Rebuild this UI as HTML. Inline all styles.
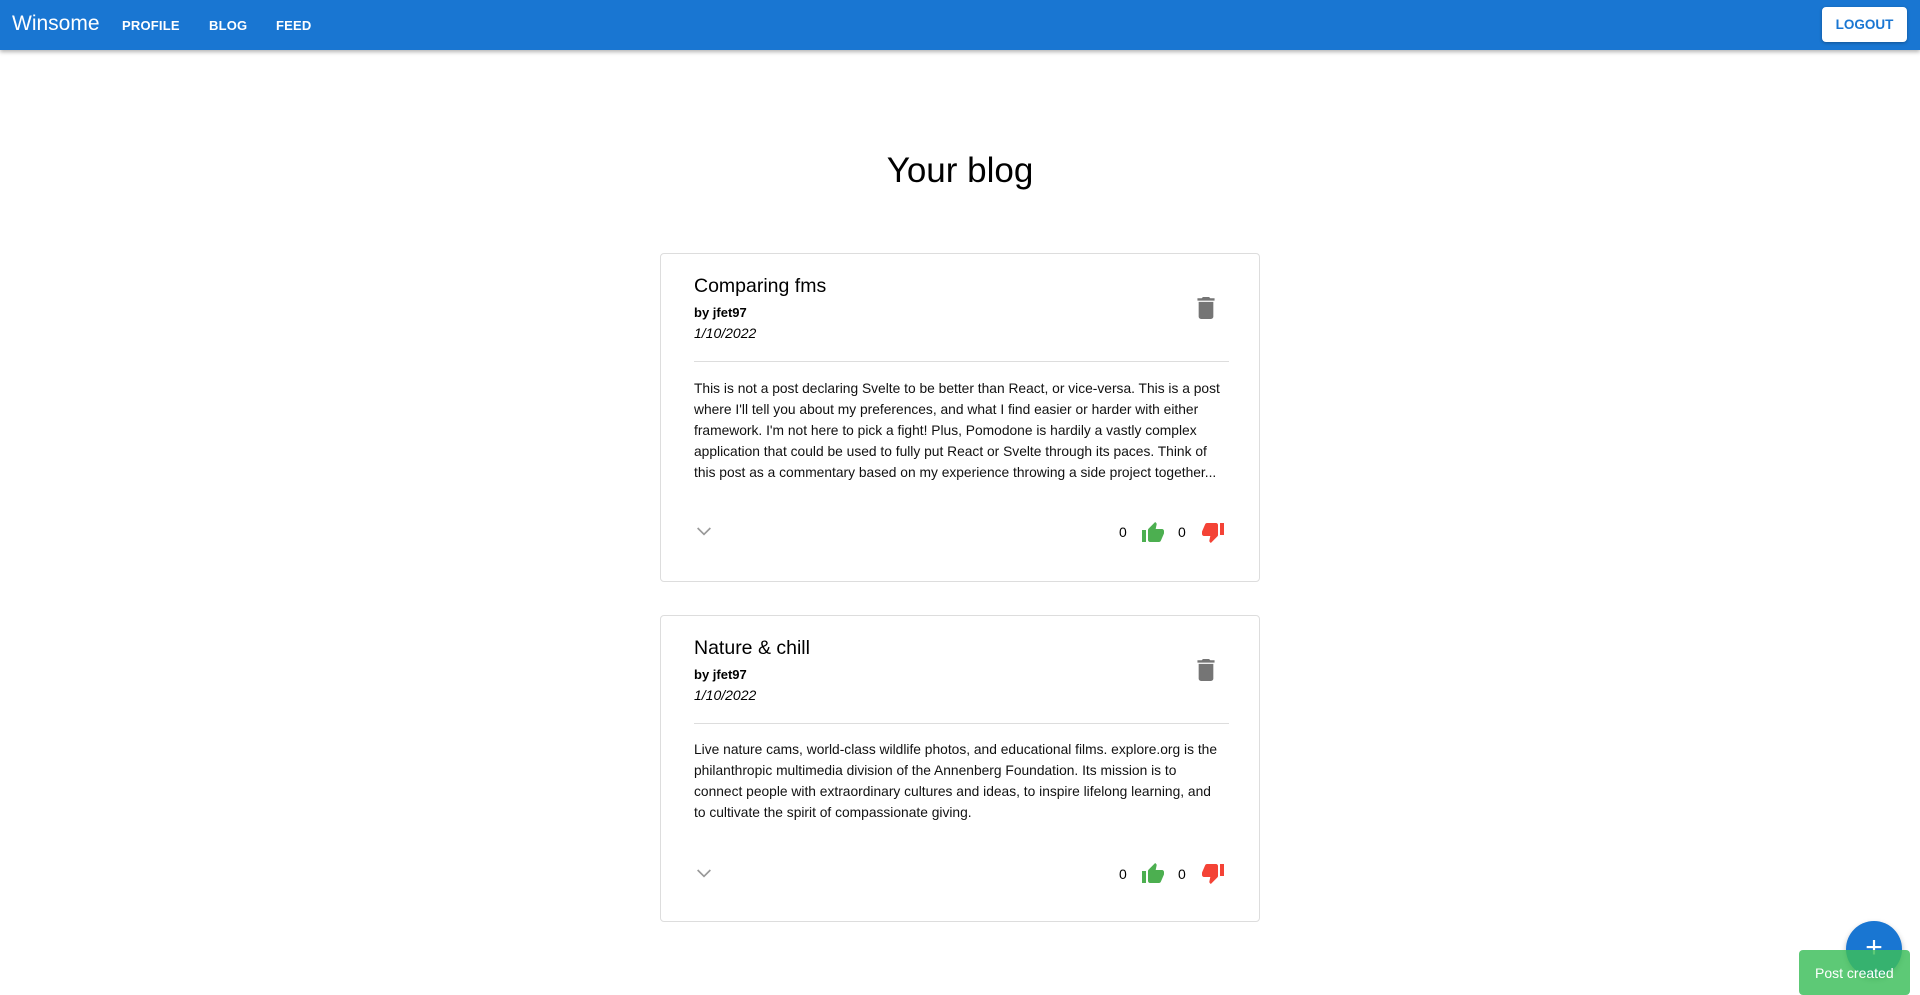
<!DOCTYPE html>
<html><head><meta charset="utf-8"><style>
*{box-sizing:border-box;margin:0;padding:0}
body{width:1920px;height:995px;overflow:hidden;background:#fff;font-family:"Liberation Sans",Roboto,sans-serif;color:#000;position:relative}
.hdr{position:absolute;left:0;top:0;width:1920px;height:50px;background:#1976d2;box-shadow:0 2px 4px rgba(0,0,0,.3);color:#fff}
.hdr .logo{position:absolute;left:12px;top:12px;font-size:21px}
.hdr .nav{position:absolute;top:18px;font-size:13px;font-weight:bold;letter-spacing:.2px}
.logout{position:absolute;left:1822px;top:7px;width:85px;height:35px;background:#fff;color:#1976d2;border-radius:4px;font-size:13.5px;font-weight:bold;text-align:center;line-height:35px;box-shadow:0 1px 3px rgba(0,0,0,.3)}
h1{position:absolute;left:0;width:1920px;top:151px;text-align:center;font-weight:normal;font-size:35px}
.card{position:absolute;left:660px;width:600px;border:1px solid #ddd;border-radius:4px}
.a{position:absolute;white-space:nowrap}
.t{left:33px;font-size:19.5px;font-weight:500}
.by{left:33px;font-size:13px;font-weight:bold}
.dt{left:33px;font-size:14px;font-style:italic}
.hr{position:absolute;left:33px;width:535px;height:1px;background:#ddd}
.body{position:absolute;left:33px;width:532px;font-size:13.8px;line-height:21px;color:#111}
.cnt{font-size:14px}
</style></head><body>
<div class="hdr"><div class="logo">Winsome</div>
<div class="nav" style="left:122px">PROFILE</div><div class="nav" style="left:209px">BLOG</div><div class="nav" style="left:276px">FEED</div>
<div class="logout">LOGOUT</div></div>
<h1>Your blog</h1>

<div class="card" style="top:253px;height:329px">
<div class="a t" style="top:21px">Comparing fms</div>
<div class="a by" style="top:51px">by jfet97</div>
<div class="a dt" style="top:71px">1/10/2022</div>
<svg class="a" style="left:535px;top:43px" width="20" height="22" viewBox="5 3 14 18"><path fill="#757575" d="M6 19c0 1.1.9 2 2 2h8c1.1 0 2-.9 2-2V7H6v12zM19 4h-3.5l-1-1h-5l-1 1H5v2h14V4z"/></svg>
<div class="hr" style="top:107px"></div>
<div class="body" style="top:124px">This is not a post declaring Svelte to be better than React, or vice-versa. This is a post where I'll tell you about my preferences, and what I find easier or harder with either framework. I'm not here to pick a fight! Plus, Pomodone is hardily a vastly complex application that could be used to fully put React or Svelte through its paces. Think of this post as a commentary based on my experience throwing a side project together...</div>
<svg class="a" style="left:36px;top:273px" width="14" height="9" viewBox="6.5 8.5 11 6.5"><path fill="none" stroke="#999" stroke-width="1.3" d="M7 9l5 5 5-5"/></svg>
<div class="a cnt" style="left:458px;top:270px">0</div>
<svg class="a" style="left:480px;top:267px" width="24" height="24" viewBox="0 0 24 24"><path fill="#4caf50" d="M1 21h4V9H1v12zm22-11c0-1.1-.9-2-2-2h-6.31l.95-4.57.03-.32c0-.41-.17-.79-.44-1.06L14.17 1 7.59 7.59C7.22 7.95 7 8.45 7 9v10c0 1.1.9 2 2 2h9c.83 0 1.54-.5 1.84-1.22l3.02-7.05c.09-.23.14-.47.14-.73v-2z"/></svg>
<div class="a cnt" style="left:517px;top:270px">0</div>
<svg class="a" style="left:540px;top:266px" width="24" height="24" viewBox="0 0 24 24"><path fill="#f44336" d="M15 3H6c-.83 0-1.54.5-1.84 1.220l-3.02 7.05c-.09.23-.14.47-.14.73v2c0 1.1.9 2 2 2h6.31l-.95 4.57-.03.32c0 .41.17.79.44 1.06L9.83 23l6.59-6.59c.36-.36.58-.86.58-1.41V5c0-1.1-.9-2-2-2zm4 0v12h4V3h-4z"/></svg>
</div>

<div class="card" style="top:615px;height:307px">
<div class="a t" style="top:21px">Nature &amp; chill</div>
<div class="a by" style="top:51px">by jfet97</div>
<div class="a dt" style="top:71px">1/10/2022</div>
<svg class="a" style="left:535px;top:43px" width="20" height="22" viewBox="5 3 14 18"><path fill="#757575" d="M6 19c0 1.1.9 2 2 2h8c1.1 0 2-.9 2-2V7H6v12zM19 4h-3.5l-1-1h-5l-1 1H5v2h14V4z"/></svg>
<div class="hr" style="top:107px"></div>
<div class="body" style="top:123px">Live nature cams, world-class wildlife photos, and educational films. explore.org is the philanthropic multimedia division of the Annenberg Foundation. Its mission is to connect people with extraordinary cultures and ideas, to inspire lifelong learning, and to cultivate the spirit of compassionate giving.</div>
<svg class="a" style="left:36px;top:253px" width="14" height="9" viewBox="6.5 8.5 11 6.5"><path fill="none" stroke="#999" stroke-width="1.3" d="M7 9l5 5 5-5"/></svg>
<div class="a cnt" style="left:458px;top:250px">0</div>
<svg class="a" style="left:480px;top:246px" width="24" height="24" viewBox="0 0 24 24"><path fill="#4caf50" d="M1 21h4V9H1v12zm22-11c0-1.1-.9-2-2-2h-6.31l.95-4.57.03-.32c0-.41-.17-.79-.44-1.06L14.17 1 7.59 7.59C7.22 7.95 7 8.45 7 9v10c0 1.1.9 2 2 2h9c.83 0 1.54-.5 1.84-1.22l3.02-7.05c.09-.23.14-.47.14-.73v-2z"/></svg>
<div class="a cnt" style="left:517px;top:250px">0</div>
<svg class="a" style="left:540px;top:245px" width="24" height="24" viewBox="0 0 24 24"><path fill="#f44336" d="M15 3H6c-.83 0-1.54.5-1.84 1.22l-3.02 7.05c-.09.23-.14.47-.14.73v2c0 1.1.9 2 2 2h6.31l-.95 4.57-.03.32c0 .41.17.79.44 1.06L9.83 23l6.59-6.59c.36-.36.58-.86.58-1.41V5c0-1.1-.9-2-2-2zm4 0v12h4V3h-4z"/></svg>
</div>

<div style="position:absolute;left:1846px;top:921px;width:56px;height:56px;border-radius:50%;background:#1976d2;box-shadow:0 3px 6px rgba(0,0,0,.3);color:#fff;font-size:30px;text-align:center;line-height:54px;font-weight:300">+</div>
<div style="position:absolute;left:1799px;top:950px;width:111px;height:45px;background:rgba(60,190,90,.83);border-radius:4px;color:#fff;font-size:14px;padding:15px 0 0 16px;white-space:nowrap">Post created</div>
</body></html>
